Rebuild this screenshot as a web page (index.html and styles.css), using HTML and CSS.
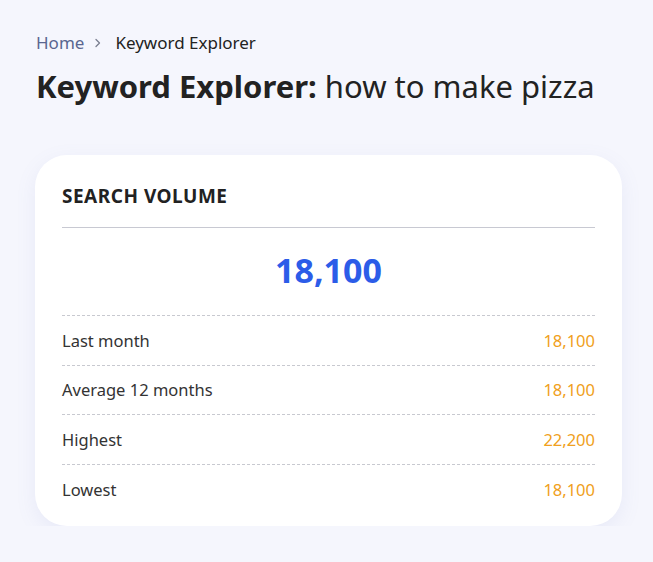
FILE: index.html
```html
<!DOCTYPE html>
<html>
<head>
<meta charset="utf-8">
<link rel="stylesheet" href="styles.css">
</head>
<body>
<div class="page">
  <nav class="crumbs">
    <a class="crumb-link">Home</a>
    <svg class="chev" width="8" height="10" viewBox="0 0 8 10"><path d="M2 1.5 L5.5 5 L2 8.5" fill="none" stroke="#7a7f8f" stroke-width="1.3" stroke-linecap="round" stroke-linejoin="round"/></svg>
    <span class="crumb-current">Keyword Explorer</span>
  </nav>
  <h1 class="title"><strong>Keyword Explorer:</strong> how to make pizza</h1>
  <section class="card">
    <h2 class="card-title">SEARCH VOLUME</h2>
    <div class="big">18,100</div>
    <div class="rows">
      <div class="row"><span class="label">Last month</span><span class="val">18,100</span></div>
      <div class="row"><span class="label">Average 12 months</span><span class="val">18,100</span></div>
      <div class="row"><span class="label">Highest</span><span class="val">22,200</span></div>
      <div class="row"><span class="label">Lowest</span><span class="val">18,100</span></div>
    </div>
  </section>
</div>
</body>
</html>
```
FILE: styles.css
```css
html, body {
  margin: 0;
  padding: 0;
  background: #f5f6fd;
  font-family: "Noto Sans", "Open Sans", sans-serif;
  color: #222;
}
.page {
  padding: 30px 31px 0 36px;
}
.crumbs {
  display: flex;
  align-items: center;
  gap: 10px;
  font-size: 17px;
  line-height: 26px;
}
.crumb-link {
  color: #5a6690;
}
.chev { margin: 0 3px 0 0; }
.crumb-current {
  color: #222;
}
.title {
  margin: 8px 0 0;
  font-size: 31px;
  font-weight: 400;
  line-height: 44px;
  color: #222;
}
.title strong { font-weight: 700; }
.card {
  margin: 47px 0 0 -1px;
  background: #fff;
  border-radius: 32px;
  padding: 29px 27px 13px 27px;
  box-shadow: 0 6px 20px rgba(120, 130, 200, 0.10);
}
.card-title {
  margin: 0;
  font-size: 19px;
  font-weight: 700;
  letter-spacing: 0.5px;
  line-height: 24px;
  padding-bottom: 19px;
  border-bottom: 1px solid #c8c9d2;
  color: #222;
}
.big {
  text-align: center;
  color: #2c5ce8;
  font-size: 34px;
  font-weight: 700;
  line-height: 44px;
  padding: 20px 0 23px;
}
.rows {
  border-top: 1px dashed #c8c9d0;
}
.row {
  display: flex;
  justify-content: space-between;
  align-items: center;
  height: 48.6px;
  font-size: 16.5px;
  border-bottom: 1px dashed #c8c9d0;
}
.row:last-child { border-bottom: none; }
.label { color: #333; }
.val { color: #f0a020; }
```
